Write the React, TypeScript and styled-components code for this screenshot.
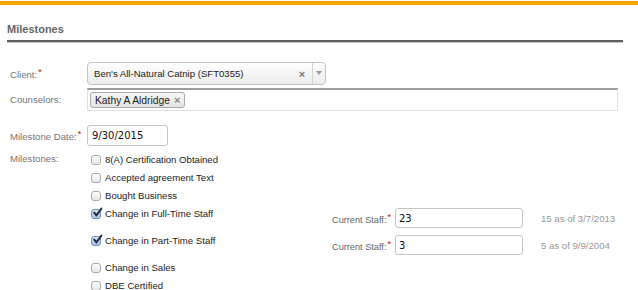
import React, { useState } from 'react';
import styled, { createGlobalStyle } from 'styled-components';

const GlobalStyle = createGlobalStyle`
  body {
    margin: 0;
    background: #fff;
    font-family: 'Liberation Sans', Arial, Helvetica, sans-serif;
  }
`;

interface Milestone {
  name: string;
  checked: boolean;
  staff?: string;
  note?: string;
}

const initialMilestones: Milestone[] = [
  { name: '8(A) Certification Obtained', checked: false },
  { name: 'Accepted agreement Text', checked: false },
  { name: 'Bought Business', checked: false },
  { name: 'Change in Full-Time Staff', checked: true, staff: '23', note: '15 as of 3/7/2013' },
  { name: 'Change in Part-Time Staff', checked: true, staff: '3', note: '5 as of 9/9/2004' },
  { name: 'Change in Sales', checked: false },
  { name: 'DBE Certified', checked: false },
];

const CheckMark = () => (
  <svg width="11" height="11" viewBox="0 0 11 11">
    <path d="M2.2 5.6 L4.4 8.4 L9.4 1.6" fill="none" stroke="#1d2a44" strokeWidth="1.9" strokeLinecap="round" strokeLinejoin="round" />
  </svg>
);

const App: React.FC = () => {
  const [milestones, setMilestones] = useState(initialMilestones);

  const toggle = (index: number) => {
    setMilestones(milestones.map((m, i) => (i === index ? { ...m, checked: !m.checked } : m)));
  };

  return (
    <>
      <GlobalStyle />
      <TopBar />
      <Section>
        <Heading>Milestones</Heading>

        <FormRow>
          <Label>Client:<Req>*</Req></Label>
          <Select>
            <SelectText>Ben's All-Natural Catnip (SFT0355)</SelectText>
            <ClearX>×</ClearX>
            <SelectArrow>
              <svg width="6" height="4" viewBox="0 0 6 4">
                <path d="M0 0 L6 0 L3 4 Z" fill="#999" />
              </svg>
            </SelectArrow>
          </Select>
        </FormRow>

        <FormRow $gap={3}>
          <Label>Counselors:</Label>
          <MultiBox>
            <Tag>
              Kathy A Aldridge <TagX>×</TagX>
            </Tag>
          </MultiBox>
        </FormRow>

        <FormRow $gap={14}>
          <Label>Milestone Date:<Req>*</Req></Label>
          <DateInput defaultValue="9/30/2015" />
        </FormRow>

        <FormRow $gap={4} $top>
          <Label $tall>Milestones:</Label>
          <List>
            {milestones.map((m, i) => (
              <MilestoneRow key={m.name}>
                <CheckLabel onClick={() => toggle(i)}>
                  <Box $checked={m.checked}>{m.checked && <CheckMark />}</Box>
                  {m.name}
                </CheckLabel>
                {m.checked && m.staff !== undefined && (
                  <Staff>
                    <StaffLabel>
                      <span>Current Staff:<Req>*</Req></span>
                    </StaffLabel>
                    <StaffInput defaultValue={m.staff} />
                    <Note>{m.note}</Note>
                  </Staff>
                )}
              </MilestoneRow>
            ))}
          </List>
        </FormRow>
      </Section>
    </>
  );
};

const TopBar = styled.div`
  margin-top: 1px;
  height: 4px;
  background: #f7a600;
`;

const Section = styled.div`
  width: 616px;
  margin-left: 7px;
`;

const Heading = styled.div`
  padding-top: 17px;
  height: 18px;
  font-size: 11px;
  font-weight: bold;
  color: #666;
  line-height: 15px;
  border-bottom: 2px solid #5e5e5e;
  box-shadow: 0 1px 0 #c8c8c8;
  margin-bottom: 20px;
`;

const FormRow = styled.div<{ $gap?: number; $top?: boolean }>`
  display: flex;
  align-items: ${p => (p.$top ? 'flex-start' : 'center')};
  margin-top: ${p => p.$gap || 0}px;
  padding-left: 3px;
`;

const Label = styled.div<{ $tall?: boolean }>`
  width: 77px;
  flex: none;
  font-size: 9.6px;
  color: #777;
  white-space: nowrap;
  line-height: ${p => (p.$tall ? '18px' : '14px')};
`;

const Req = styled.span`
  color: #d40000;
  font-size: 9px;
  vertical-align: 3px;
  margin-left: 1px;
`;

const Select = styled.div`
  width: 239px;
  height: 23px;
  box-sizing: border-box;
  border: 1px solid #c4c4c4;
  border-radius: 4px;
  background: linear-gradient(#ffffff, #ececec);
  display: flex;
  align-items: center;
`;

const SelectText = styled.div`
  flex: 1;
  padding-left: 6px;
  font-size: 9.6px;
  color: #222;
  white-space: nowrap;
`;

const ClearX = styled.div`
  width: 20px;
  text-align: center;
  color: #777;
  font-size: 11px;
  font-weight: bold;
`;

const SelectArrow = styled.div`
  width: 13px;
  height: 100%;
  border-left: 1px solid #d4d4d4;
  display: flex;
  align-items: center;
  justify-content: center;
  padding-bottom: 2px;
  box-sizing: border-box;
`;

const MultiBox = styled.div`
  width: 531px;
  height: 23px;
  box-sizing: border-box;
  border: 1px solid #e0e0e0;
  border-top: 2px solid #9c9c9c;
  background: #fff;
  display: flex;
  align-items: center;
  padding-left: 2px;
`;

const Tag = styled.div`
  height: 16px;
  box-sizing: border-box;
  border: 1px solid #aaa;
  border-radius: 3px;
  background: linear-gradient(#f6f6f6, #e4e4e4);
  font-size: 10.3px;
  color: #222;
  display: flex;
  align-items: center;
  padding: 0 4px;
  gap: 4px;
  white-space: nowrap;
`;

const TagX = styled.span`
  color: #888;
  font-size: 11px;
  font-weight: bold;
`;

const DateInput = styled.input`
  width: 81px;
  height: 21px;
  box-sizing: border-box;
  border: 1px solid #c4c4c4;
  border-radius: 3px;
  padding: 0 4px;
  font-family: 'DejaVu Sans', sans-serif;
  font-size: 10px;
  color: #111;
  outline: none;
`;

const List = styled.div`
  display: flex;
  flex-direction: column;
  padding-left: 4px;
`;

const MilestoneRow = styled.div`
  display: flex;
  align-items: flex-start;
  min-height: 18px;
`;

const CheckLabel = styled.label`
  width: 241px;
  flex: none;
  height: 18px;
  display: flex;
  align-items: center;
  gap: 3px;
  font-size: 9.6px;
  color: #222;
  white-space: nowrap;
  cursor: pointer;
`;

const Box = styled.span<{ $checked: boolean }>`
  width: 10px;
  height: 10px;
  box-sizing: border-box;
  border: 1px solid ${p => (p.$checked ? '#7c90b4' : '#aaa')};
  border-radius: 3px;
  background: ${p => (p.$checked ? 'linear-gradient(#d7e3f6, #a9c1e6)' : 'linear-gradient(#ffffff, #e6e6e6)')};
  display: flex;
  align-items: center;
  justify-content: center;
  margin-top: 2px;
  margin-right: 1px;
  flex: none;

  svg {
    margin-top: -3px;
    margin-left: 2px;
    flex: none;
  }
`;

const Staff = styled.div`
  display: flex;
  align-items: center;
  padding: 4px 0 3px;
`;

const StaffLabel = styled.div`
  width: 59px;
  flex: none;
  display: flex;
  justify-content: flex-end;
  font-size: 9.2px;
  color: #666;
  white-space: nowrap;
  margin-right: 4px;
`;

const StaffInput = styled.input`
  width: 128px;
  height: 20px;
  box-sizing: border-box;
  border: 1px solid #c4c4c4;
  border-radius: 3px;
  padding: 0 3px;
  font-family: 'DejaVu Sans', sans-serif;
  font-size: 10px;
  color: #111;
  outline: none;
`;

const Note = styled.div`
  margin-left: 18px;
  font-size: 9.6px;
  color: #999;
  white-space: nowrap;
`;

export default App;
